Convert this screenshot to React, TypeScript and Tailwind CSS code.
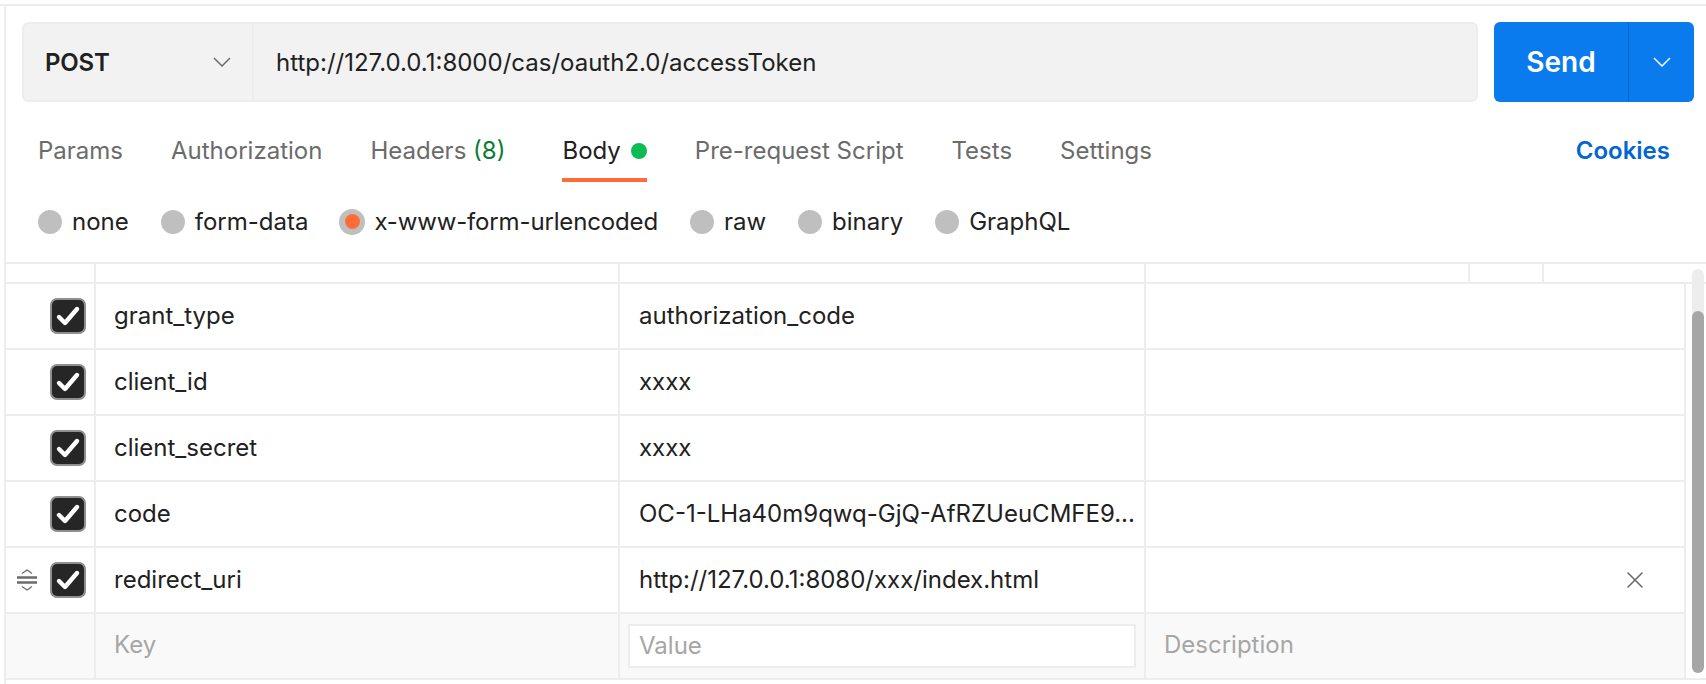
import { X } from "lucide-react";

const TABS = ["Pre-request Script", "Tests", "Settings"];
const BODY_TYPES = ["none", "form-data", "x-www-form-urlencoded", "raw", "binary", "GraphQL"];
const ROWS = [
  { key: "grant_type", value: "authorization_code" },
  { key: "client_id", value: "xxxx" },
  { key: "client_secret", value: "xxxx" },
  { key: "code", value: "OC-1-LHa40m9qwq-GjQ-AfRZUeuCMFE9..." },
  { key: "redirect_uri", value: "http://127.0.0.1:8080/xxx/index.html", hover: true },
];

function Chevron({ className }: { className: string }) {
  return (
    <svg width="18" height="10" viewBox="0 0 18 10" fill="none" className={className}>
      <path d="M1 1l8 8 8-8" stroke="currentColor" strokeWidth="1.5" />
    </svg>
  );
}

function Checkbox() {
  return (
    <div className="flex h-9 w-9 items-center justify-center rounded-[7px] border-2 border-[#8f8f8f] bg-[#262626]">
      <svg width="26" height="22" viewBox="0 0 26 22" fill="none">
        <path d="M4 12l6 6L22 4" stroke="#fff" strokeWidth="4.4" strokeLinecap="round" strokeLinejoin="round" />
      </svg>
    </div>
  );
}

function DragHandle() {
  return (
    <svg width="20" height="22" viewBox="0 0 20 22" fill="none" className="text-[#6b6b6b]">
      <path d="M5 4.5l5-3.5 5 3.5M5 17.5l5 3.5 5-3.5" stroke="currentColor" strokeWidth="1.3" />
      <path d="M0 8.5h20M0 13.5h20" stroke="currentColor" strokeWidth="2.4" />
    </svg>
  );
}

export default function App() {
  return (
    <div className="h-[684px] w-[1706px] overflow-hidden bg-white pt-1 font-['Inter',sans-serif] text-[#212121]">
      <div className="h-[2px] bg-[#ededed]" />
      <div className="ml-1 flex h-[678px] flex-col border-l-2 border-[#ededed]">
        {/* URL bar */}
        <div className="flex h-[80px] items-stretch pt-4 box-content pl-4 pr-3">
          <div className="flex w-[1456px] rounded-[6px] border-2 border-[#ededed] bg-[#f2f2f2]">
            <div className="flex w-[230px] items-center justify-between border-r-2 border-[#ededed] pl-[21px] pr-[21px]">
              <span className="pt-[1px] text-[24px] font-semibold tracking-[-0.2px]">POST</span>
              <Chevron className="text-[#6b6b6b]" />
            </div>
            <div className="flex items-center pl-[22px] pt-[1px] text-[24px]">http://127.0.0.1:8000/cas/oauth2.0/accessToken</div>
          </div>
          <div className="ml-4 flex w-[200px] rounded-[6px] bg-[#097bed] text-white">
            <div className="flex w-[135px] items-center justify-center border-r border-[#0265d2] text-[28px] font-semibold">Send</div>
            <div className="flex flex-1 items-center justify-center">
              <Chevron className="text-white" />
            </div>
          </div>
        </div>

        {/* Request tabs */}
        <div className="flex h-[80px] items-start justify-between pl-8 pr-[36px] text-[24px] text-[#6b6b6b]">
          <div className="flex gap-[48px]">
            <span className="pt-[31px]">Params</span>
            <span className="pt-[31px]">Authorization</span>
            <span className="pt-[31px]">
              Headers <span className="text-[#0a7d33]">(8)</span>
            </span>
            <div className="ml-[9px] flex h-[80px] items-start gap-[10px] border-b-4 border-[#ff6c37] pt-[31px] text-[#212121]">
              <span>Body</span>
              <span className="mt-[10px] h-4 w-4 rounded-full bg-[#0cbb52]" />
            </div>
            {TABS.map((t) => (
              <span key={t} className="pt-[31px]">{t}</span>
            ))}
          </div>
          <span className="pt-[31px] font-semibold text-[#0265d2]">Cookies</span>
        </div>

        {/* Body type radios */}
        <div className="flex h-[80px] items-center gap-[32px] pb-[1px] pl-8 text-[24px]">
          {BODY_TYPES.map((t) =>
            t === "x-www-form-urlencoded" ? (
              <div key={t} className="flex items-center gap-[10px]">
                <span className="-mx-px flex h-[26px] w-[26px] items-center justify-center rounded-full bg-[#bfbfbf]">
                  <span className="h-[15px] w-[15px] rounded-full bg-[#ff6c37]" />
                </span>
                <span className="tracking-[-0.15px]">{t}</span>
              </div>
            ) : (
              <div key={t} className="flex items-center gap-[10px]">
                <span className="h-6 w-6 rounded-full bg-[#bfbfbf]" />
                <span>{t}</span>
              </div>
            )
          )}
        </div>

        {/* Params table */}
        <div className="relative flex-1 border-t-2 border-[#ededed]">
          <div className="flex h-5 border-b-2 border-[#ededed]">
            <div className="w-[90px] border-r-2 border-[#ededed]" />
            <div className="w-[524px] border-r-2 border-[#ededed]" />
            <div className="w-[526px] border-r-2 border-[#ededed]" />
            <div className="w-[324px] border-r-2 border-[#ededed]" />
            <div className="w-[74px] border-r-2 border-[#ededed]" />
          </div>
          <div className="w-[1680px] border-r-2 border-[#ededed] text-[24px]">
            {ROWS.map((r) => (
              <div key={r.key} className="flex h-[66px] border-b-2 border-[#ededed]">
                <div className="flex w-[90px] items-center border-r-2 border-[#ededed]">
                  <div className="flex w-[44px] justify-center pr-[3px]">{r.hover && <DragHandle />}</div>
                  <Checkbox />
                </div>
                <div className="flex w-[524px] items-center border-r-2 border-[#ededed] pl-[18px]">{r.key}</div>
                <div className="flex w-[526px] items-center overflow-hidden border-r-2 border-[#ededed] pl-[19px] whitespace-nowrap">{r.value}</div>
                <div className="flex flex-1 items-center justify-end pr-[35px]">
                  {r.hover && <X size={28} strokeWidth={1.3} className="text-[#6b6b6b]" />}
                </div>
              </div>
            ))}
            <div className="flex h-[64px] bg-[#f9f9f9] text-[#a6a6a6]">
              <div className="w-[90px] border-r-2 border-[#ededed]" />
              <div className="flex w-[524px] items-center border-r-2 border-[#ededed] pb-[2px] pl-[18px]">Key</div>
              <div className="flex w-[526px] items-center border-r-2 border-[#ededed] px-[8px]">
                <div className="flex h-[44px] w-full items-center border-2 border-[#ededed] bg-white pb-[1px] pl-[9px]">Value</div>
              </div>
              <div className="flex flex-1 items-center pb-[2px] pl-[18px]">Description</div>
            </div>
          </div>
          <div className="h-[2px] bg-[#ededed]" />
          {/* Scrollbar */}
          <div className="absolute left-[1686px] top-[5px] h-[404px] w-3 rounded-full bg-[#ededed]">
            <div className="mt-[42px] h-[362px] rounded-full bg-[#a6a6a6]" />
          </div>
        </div>
      </div>
    </div>
  );
}
